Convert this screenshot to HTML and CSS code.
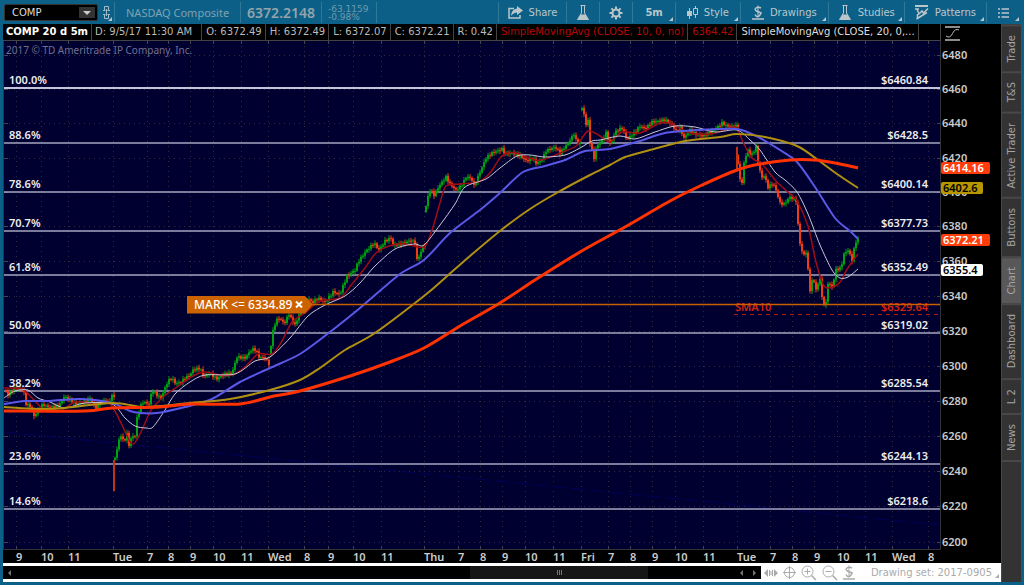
FILE: index.html
```html
<!DOCTYPE html>
<html lang="en">

<head>
  <meta charset="UTF-8">
  <meta name="viewport" content="width=device-width, initial-scale=1.0">
  <title>COMP 20 d 5m</title>
  <link rel="stylesheet" href="styles.css">
</head>

<body>
  <header class="toolbar">
    <div class="symbol">
      <input class="symbol-input" type="text" value="COMP" aria-label="Symbol">
      <button class="symbol-drop" aria-label="Symbol list"><svg width="8" height="4" viewBox="0 0 8 4"><path d="M0 0h8L4 4z" fill="#ccc"/></svg></button>
    </div>
    <button class="link corner" aria-label="Link">
      <svg width="7" height="13" viewBox="0 0 7 13" fill="none" stroke="#9fbccb"><path d="M1.500 5V.5h4V5M1.500 8v4.500h4V8M0 4.500h2.500M4.500 4.500H7M0 8.500h2.500M4.500 8.500H7M3.500 3v7"/></svg>
    </button>
    <div class="cell name">NASDAQ Composite</div>
    <div class="cell last">6372.2148</div>
    <div class="cell change"><span>-63.1159</span><span>-0.98%</span></div>
    <div class="cell spacer"></div>
    <button class="cell tool share">
      <svg width="15" height="13" viewBox="0 0 15 13"><path d="M6 2.500H1V12h11V9" fill="none" stroke="#bbc6cb" stroke-width="1.500"/><path d="M9 0l6 4.500L9 9V6.500Q5.500 6.500 3 10 3.500 3 9 2.500z" fill="#bbc6cb"/></svg>
      Share
    </button>
    <button class="cell tool flask" aria-label="Lab">
      <svg width="14" height="16" viewBox="0 0 14 16"><path d="M4.500 .5h5M5.500 1v7L1.500 14.500h11L8.500 8V1" fill="none" stroke="#bbc6cb"/><path d="M4.500 9.500h5l3 5.500h-11z" fill="#bbc6cb"/></svg>
    </button>
    <button class="cell tool gear" aria-label="Settings">
      <svg width="14" height="14" viewBox="0 0 14 14" fill="none" stroke="#bbc6cb"><circle cx="7" cy="7" r="3.500" stroke-width="2"/><path d="M7 .5v2.500M7 11v2.500M.5 7H3M11 7h2.500M2.400 2.400l1.800 1.800M9.800 9.800l1.800 1.800M2.400 11.600l1.800-1.800M9.800 4.200l1.800-1.800" stroke-width="2"/></svg>
    </button>
    <button class="cell tool period corner">5m</button>
    <button class="cell tool style corner">
      <svg width="11" height="13" viewBox="0 0 11 13"><path d="M2.500 2v11M8.500 0v2M8.500 9v3" stroke="#bbc6cb"/><path d="M0 5h5v5H0z" fill="#bbc6cb"/><path d="M6.500 2.500h4v6h-4z" fill="none" stroke="#bbc6cb"/></svg>
      Style
    </button>
    <button class="cell tool drawings corner">
      <svg width="12" height="15" viewBox="0 0 12 15" fill="none" stroke="#bbc6cb" stroke-width="1.500"><path d="M9 3Q6 1.500 4 3T4.500 6 8.500 7.500 7.500 10.500 3 9.500"/><path d="M6 .5v11" stroke-width="1"/><path d="M0 14h12"/></svg>
      Drawings
    </button>
    <button class="cell tool studies corner">
      <svg width="14" height="16" viewBox="0 0 14 16"><path d="M4.500 .5h5M5.500 1v7L1.500 14.500h11L8.500 8V1" fill="none" stroke="#bbc6cb"/><path d="M4.500 9.500h5l3 5.500h-11z" fill="#bbc6cb"/></svg>
      Studies
    </button>
    <button class="cell tool patterns corner">
      <svg width="14" height="15" viewBox="0 0 14 15" fill="none" stroke="#bbc6cb"><path d="M0 1h13" stroke-width="2"/><path d="M2 4l2 5 3-3 1.500 2L13 3.500M1.500 14L12 7.500M2.500 13V9M0 4h4" stroke-width="1.500"/></svg>
      Patterns
    </button>
    <button class="cell tool list corner" aria-label="Menu">
      <svg width="11" height="10" viewBox="0 0 11 10" stroke="#bbc6cb" stroke-width="1.500"><path d="M0 1h2M3.500 1H11M0 5h2M3.500 5H11M0 9h2M3.500 9H11"/></svg>
    </button>
  </header>

  <main class="workspace">
    <section class="chart">
      <div class="info">
        <b>COMP 20 d 5m</b>
        <span class="date">D: 9/5/17 11:30 AM</span>
        <span>O: 6372.49</span>
        <span>H: 6372.49</span>
        <span>L: 6372.07</span>
        <span>C: 6372.21</span>
        <span>R: 0.42</span>
        <span class="sma10">SimpleMovingAvg (CLOSE, 10, 0, no)</span>
        <span class="sma10">6364.42</span>
        <span class="sma20">SimpleMovingAvg (CLOSE, 20, 0,...</span>
        <span class="rest"></span>
        <button class="fit" aria-label="Fit price axis">
          <svg width="15" height="15" viewBox="0 0 15 15" fill="none" stroke="#bbb"><path d="M0 1h15M0 14h15" stroke-width="1.500"/><path d="M1 10q4 3 6.500-2.500T14 4"/></svg>
        </button>
      </div>
      <svg class="plot" id="plot" role="img" aria-label="NASDAQ Composite, 5 minute candles"></svg>
      <footer class="bottom">
        <div class="scroll">
          <button aria-label="Scroll to start"><svg width="3" height="6" viewBox="0 0 3 6"><path d="M3 0v6L0 3z" fill="#777"/></svg></button>
          <div class="track"><span></span><div class="thumb"><i></i><i></i><i></i></div><span></span></div>
          <button aria-label="Scroll left"><svg width="3" height="6" viewBox="0 0 3 6"><path d="M3 0v6L0 3z" fill="#777"/></svg></button>
          <button aria-label="Scroll right"><svg width="3" height="6" viewBox="0 0 3 6"><path d="M0 0v6l3-3z" fill="#777"/></svg></button>
        </div>
        <div class="zoom">
          <button aria-label="Expand"><svg width="14" height="8" viewBox="0 0 14 8"><path d="M4 0v8L0 4zM10 0v8l4-4z" fill="#aaa"/><path d="M5.500 1v6M8.500 1v6M7 2v4" stroke="#aaa"/></svg></button>
          <button aria-label="Crosshair"><svg width="13" height="13" viewBox="0 0 13 13" fill="none" stroke="#aaa"><circle cx="6.500" cy="6.500" r="5"/><path d="M6.500 0v13M0 6.500h13"/></svg></button>
          <button aria-label="Zoom in"><svg width="16" height="16" viewBox="0 0 16 16" fill="none" stroke="#aaa"><circle cx="6.500" cy="6.500" r="5.500"/><path d="M3.500 6.500h6M6.500 3.500v6"/><path d="M10.500 10.500l4.500 4.500" stroke-width="1.500"/></svg></button>
          <button aria-label="Zoom out"><svg width="16" height="16" viewBox="0 0 16 16" fill="none" stroke="#aaa"><circle cx="6.500" cy="6.500" r="5.500"/><path d="M3.500 6.500h6"/><path d="M10.500 10.500l4.500 4.500" stroke-width="1.500"/></svg></button>
          <button aria-label="Drawings"><svg width="12" height="15" viewBox="0 0 12 15" fill="none" stroke="#aaa" stroke-width="1.500"><path d="M9 3Q6 1.500 4 3T4.500 6 8.500 7.500 7.500 10.500 3 9.500"/><path d="M6 .5v11" stroke-width="1"/><path d="M0 14h12"/></svg></button>
        </div>
        <button class="set corner">Drawing set: 2017-0905</button>
      </footer>
    </section>
    <nav class="tabs">
      <button>Trade</button>
      <button>T&amp;S</button>
      <button>Active Trader</button>
      <button>Buttons</button>
      <button class="active">Chart</button>
      <button>Dashboard</button>
      <button>L 2</button>
      <button>News</button>
      <span class="end"></span>
    </nav>
  </main>
  <script src="chart.js"></script>
</body>

</html>
```

FILE: styles.css
```css
*,
*::before,
*::after {
  box-sizing: border-box;
}
body {
  display: flex;
  flex-flow: column;
  height: 100vh;
  margin: 0;
  padding: 0 3px 3px;
  background: #0c5f86;
  color: #bbb;
  font: 10px/14px "DejaVu Sans", sans-serif;
  overflow: hidden;
}
button,
input {
  margin: 0;
  padding: 0;
  border: 0;
  background: none;
  color: inherit;
  font: inherit;
}
svg {
  display: block;
  flex: none;
}

/* toolbar */
.toolbar {
  display: flex;
  flex: none;
  align-items: stretch;
  height: 24px;
  padding: 2px 0 1px;
  color: #bbc6cb;
}
.symbol {
  display: flex;
  align-items: center;
  width: 94px;
  height: 17px;
  margin: 2px 0 0 1px;
  padding: 1px 2px;
  border: 1px solid #333;
  border-radius: 2px;
  background: #000;
}
.symbol-input {
  flex: 1;
  min-width: 0;
  padding-left: 5px;
  color: #ddd;
}
.symbol-drop {
  display: flex;
  align-items: center;
  justify-content: center;
  width: 16px;
  height: 11px;
  background: #333;
}
.link {
  display: flex;
  align-items: center;
  width: 16px;
  padding-left: 5px;
}
.cell {
  display: flex;
  align-items: center;
  border-left: 1px solid #2f7898;
}
.corner {
  position: relative;
}
.corner::after {
  content: "";
  position: absolute;
  right: 2px;
  bottom: 2px;
  border: 2px solid transparent;
  border-right-color: #bbc6cb;
  border-bottom-color: #bbc6cb;
}
.name {
  padding: 0 11px;
  color: #7fa3b4;
  font: 11px "Noto Sans", sans-serif;
}
.last {
  padding: 0 6px;
  color: #94a4ab;
  font: 600 14px "Noto Sans", sans-serif;
}
.change {
  flex-flow: column;
  align-items: flex-start;
  justify-content: center;
  width: 55px;
  padding-left: 6px;
  color: #6f9aad;
  font-size: 9px;
  line-height: 8px;
}
.spacer {
  flex: 1;
}
.tool {
  gap: 6px;
  padding: 0 9px;
}
.period {
  padding: 0 12px;
  font-weight: bold;
}
.style,
.drawings {
  padding: 0 11px;
}
.patterns {
  padding: 0 10px;
}
.list {
  padding: 0 12px 0 11px;
}

/* chart */
.workspace {
  display: flex;
  flex: 1;
  min-height: 0;
}
.chart {
  display: flex;
  flex: 1;
  flex-flow: column;
  min-width: 0;
  background: #000;
}
.info {
  display: flex;
  flex: none;
  height: 17px;
  margin-right: 40px;
  line-height: 16px;
  white-space: nowrap;
}
.info b,
.info span {
  padding: 0 3px 0 4px;
  border-right: 1px solid #444;
  border-bottom: 1px solid #444;
}
.info b {
  padding: 0 3px;
  color: #fff;
}
.info .date {
  padding: 0 9px 0 3px;
}
.info .sma10 {
  color: #b40808;
}
.info .sma20 {
  color: #ddd;
}
.info .rest {
  flex: 1;
}
.fit {
  padding: 1px 1px 0 4px;
}
.plot {
  flex: 1;
  width: 100%;
  min-height: 0;
  font: 600 11px "Noto Sans", sans-serif;
}
.plot .legal {
  font: 10px "Noto Sans", sans-serif;
}
.plot .alert {
  font-size: 12px;
  font-weight: 500;
}

/* bottom bar */
.bottom {
  display: flex;
  flex: none;
  align-items: center;
  height: 19px;
  background: #fff;
  color: #aaa;
}
.scroll {
  display: flex;
  flex: 1;
  height: 13px;
  background: #000;
}
.scroll button {
  display: flex;
  align-items: center;
  justify-content: center;
  width: 13px;
}
.track {
  display: grid;
  flex: 1;
  grid-template-columns: 452fr 177fr 86fr;
}
.thumb {
  display: flex;
  align-items: center;
  justify-content: center;
  gap: 1px;
  background: #161616;
}
.thumb i {
  width: 1px;
  height: 5px;
  background: #777;
}
.zoom {
  display: flex;
  align-items: center;
  gap: 5px;
  padding-left: 3px;
}
.set {
  margin-left: 16px;
  padding-right: 9px;
}
.set::after {
  border-right-color: #aaa;
  border-bottom-color: #aaa;
}

/* side tabs */
.tabs {
  display: flex;
  flex: none;
  flex-flow: column;
  width: 20px;
  background: #333;
  color: #a4a4a4;
}
.tabs button {
  padding: 9px 2px;
  border-bottom: 2px solid #484848;
  border-right: 1px solid #484848;
  writing-mode: vertical-rl;
  transform: rotate(180deg);
}
.tabs .active {
  background: #585858;
}
.tabs .end {
  flex: 1;
  border-top: 2px solid #484848;
  border-left: 1px solid #484848;
}
```

FILE: chart.js
```js
const plot = document.getElementById('plot')
const NS = 'http://www.w3.org/2000/svg'

// the drawing space of the studies below
const BASE = { left: 3, top: 41 }
const AXIS_X = 940
const AXIS_Y = 549

const times = [
  [16, '9'], [41, '10'], [68, '11'], [113, 'Tue'], [147, '7'], [168, '8'], [190, '9'], [213, '10'],
  [241, '11'], [268, 'Wed'], [304, '8'], [328, '9'], [353, '10'], [381, '11'], [424, 'Thu'],
  [458, '7'], [480, '8'], [502, '9'], [525, '10'], [553, '11'], [581, 'Fri'], [608, '7'],
  [630, '8'], [652, '9'], [675, '10'], [703, '11'], [737, 'Tue'], [770, '7'], [792, '8'],
  [814, '9'], [837, '10'], [865, '11'], [892, 'Wed'], [928, '8']
]

const levels = [
  ['100.0%', 6460.84], ['88.6%', 6428.5], ['78.6%', 6400.14], ['70.7%', 6377.73], ['61.8%', 6352.49],
  ['50.0%', 6319.02], ['38.2%', 6285.54], ['23.6%', 6244.13], ['14.6%', 6218.6]
]

const tags = [
  [6414.16, '#ff3c0a', '#fff'], [6402.6, '#b89600', '#000'],
  [6372.21, '#ff3c0a', '#fff'], [6355.4, '#fff', '#000']
]

// one list of closes per trading day
const sessions = [
  [5,390, 8,395, 11,391, 15,388, 23,390, 25,396, 26,404, 30,406, 34,416, 37,412, 40,408, 43,404, 47,407, 55,407, 60,404, 64,397, 69,399, 76,404, 84,402, 90,398, 93,404, 96,408, 100,403, 104,400, 109,402, 112,396],
  [114,460, 117,450, 120,434, 124,442, 127,434, 129,445, 132,436, 135,436, 137,418, 142,402, 149,404, 152,390, 157,395, 161,398, 165,388, 168,381, 172,378, 175,383, 180,383, 185,378, 190,375, 193,370, 200,368, 204,377, 209,373, 217,379, 222,375, 232,373, 237,357, 245,358, 252,349, 256,350, 259,357, 266,358, 268,364],
  [270,355, 272,335, 276,320, 280,318, 284,324, 289,314, 293,322, 296,325, 300,310, 303,305, 308,298, 312,303, 318,298, 325,302, 333,292, 340,294, 347,276, 355,270, 358,262, 366,251, 374,243, 379,250, 385,241, 391,238, 393,245, 402,244, 411,240, 415,243, 417,260, 421,252, 423,246],
  [425,212, 427,200, 430,190, 434,195, 439,186, 446,177, 450,184, 456,190, 461,186, 467,176, 472,180, 474,186, 480,172, 486,158, 492,153, 502,149, 505,154, 512,153, 520,156, 527,161, 533,158, 536,163, 541,161, 546,151, 555,147, 560,153, 568,143, 574,134, 577,143, 579,143],
  [581,110, 583,108, 586,125, 589,118, 590,143, 594,158, 597,145, 601,142, 606,133, 610,144, 616,131, 622,128, 627,139, 635,132, 640,126, 645,129, 652,122, 665,120, 672,125, 676,131, 680,128, 684,138, 690,130, 695,134, 703,136, 712,131, 718,127, 722,123, 729,127, 736,126],
  [737,155, 739,175, 742,184, 744,162, 748,150, 751,156, 756,147, 758,163, 762,178, 765,174, 767,188, 773,183, 777,193, 780,203, 784,204, 790,197, 796,201, 798,225, 800,243, 803,256, 806,252, 808,270, 810,290, 813,277, 816,290, 820,278, 821,295, 824,304, 826,303, 828,283, 833,288, 835,270, 841,268, 844,254, 848,250, 852,260, 855,244, 857,239]
]

const averages = [
  { color: '#a00c14', width: 1.5, points: [4,388, 22,389, 30,396, 38,404, 45,411, 60,411, 75,402, 90,403, 108,402, 116,413, 122,425, 132,444, 140,434, 150,412, 157,403, 168,393, 180,385, 193,376, 205,372, 220,375, 232,375, 245,367, 258,354, 272,354, 282,341, 292,322, 305,313, 320,301, 340,298, 352,284, 365,268, 376,253, 392,245, 405,244, 424,247, 432,230, 440,203, 446,186, 460,184, 478,182, 490,173, 500,158, 508,153, 520,154, 535,160, 545,159, 560,153, 576,146, 588,131, 600,136, 610,142, 622,132, 640,133, 660,123, 672,124, 690,133, 710,134, 725,130, 736,127, 743,142, 752,158, 762,164, 776,181, 790,194, 797,201, 808,226, 816,262, 824,286, 833,287, 841,281, 846,271, 852,262, 858,254] },
  { color: '#c8c8d8', width: 1, points: [4,398, 15,391, 28,390, 38,398, 50,402, 65,408, 85,403, 112,404, 125,418, 135,426, 146,428, 153,427, 165,410, 175,394, 190,382, 205,375, 235,374, 255,361, 270,357, 290,338, 308,316, 325,305, 345,296, 360,283, 375,266, 395,249, 414,244, 424,245, 440,225, 455,204, 465,187, 486,179, 500,168, 517,156, 530,155, 545,157, 565,155, 580,148, 592,141, 600,140, 620,136, 635,139, 655,132, 675,126, 695,127, 715,132, 737,130, 750,140, 760,150, 775,172, 785,180, 797,192, 808,214, 820,245, 832,270, 840,278, 848,277, 858,269] },
  { color: '#5a58e6', width: 2, points: [4,404, 25,401, 50,401, 80,399, 112,403, 130,411, 140,413, 157,413, 185,407, 212,399, 240,382, 270,368, 300,354, 330,332, 360,308, 400,274, 424,260, 450,233, 480,210, 500,193, 523,172, 545,166, 565,160, 585,151, 610,149, 640,141, 665,133, 700,130, 737,129, 760,138, 780,150, 797,162, 815,187, 835,218, 850,231, 858,239] },
  { color: '#b09010', width: 2, points: [4,407, 50,409, 112,403, 145,407, 190,403, 230,399, 270,390, 300,380, 320,368, 345,350, 375,333, 424,296, 445,278, 470,256, 500,231, 530,209, 560,191, 590,175, 610,165, 625,157, 650,150, 685,141, 720,137, 737,134, 765,137, 797,146, 818,160, 837,174, 858,188] },
  { color: '#ff3200', width: 3, points: [4,411, 85,411, 112,408, 160,407, 190,404, 240,404, 270,397, 300,391, 350,376, 390,362, 424,348, 460,326, 500,303, 535,280, 580,252, 625,227, 670,201, 700,186, 737,170, 760,164, 790,160, 815,160, 835,163, 858,168] }
]

function add (name, attrs, text) {
  const el = document.createElementNS(NS, name)
  for (const key in attrs) el.setAttribute(key, attrs[key])
  if (text !== undefined) el.textContent = text
  plot.appendChild(el)
  return el
}

function priceY (price) {
  return 55.5 + 487 * Math.log(6480 / price) / Math.log(6480 / 6200)
}

// close of the session at x, between the two nearest points
function closeAt (list, x) {
  let i = 0
  while (i < list.length - 4 && list[i + 2] < x) i += 2
  const t = Math.min(1, Math.max(0, (x - list[i]) / (list[i + 2] - list[i])))
  return list[i + 1] + (list[i + 3] - list[i + 1]) * t
}

// smooth path through the points
function curve (p) {
  let d = `M${p[0]}`
  for (let i = 0; i < p.length - 1; i++) {
    const a = p[Math.max(0, i - 1)]
    const b = p[i]
    const c = p[i + 1]
    const e = p[Math.min(p.length - 1, i + 2)]
    const k = 7
    d += `C${b[0] + (c[0] - a[0]) / k} ${b[1] + (c[1] - a[1]) / k} ${c[0] - (e[0] - b[0]) / k} ${c[1] - (e[1] - b[1]) / k} ${c}`
  }
  return d
}

function draw () {
  plot.innerHTML = ''
  const w = plot.clientWidth
  const h = plot.clientHeight
  const right = w - 61
  const bottom = h - 14
  const X = x => Math.round((x - BASE.left) * right / (AXIS_X - BASE.left))
  const Y = y => (y - BASE.top) * bottom / (AXIS_Y - BASE.top)
  const R = y => Math.round(Y(y)) + 0.5

  add('rect', { width: w, height: h, fill: '#000' })
  add('rect', { x: 1, width: right - 1, height: bottom, fill: '#000030' })
  for (let p = 6200; p <= 6480; p += 20) {
    const y = R(priceY(p) - 0.5)
    add('path', { d: `M1 ${y}H${right}`, stroke: '#2c2c3c', 'stroke-dasharray': '1 4' })
    add('path', { d: `M1 ${y}h4M${right - 3} ${y}h3`, stroke: '#444450' })
    add('text', { x: right + 2, y: y + 3.5, fill: '#ccc' }, p)
  }
  times.forEach(([t, label]) => {
    const x = X(t) + 0.5
    add('path', { d: `M${x} 0V${bottom}`, stroke: '#2c2c3c', 'stroke-dasharray': '1 4' })
    add('path', { d: `M${x} 0v3M${x} ${bottom - 3}v3`, stroke: '#444450' })
    add('text', { x: x - 0.5, y: bottom + 12, fill: '#ccc' }, label)
  })
  add('path', { d: `M1 ${Y(432)}L${right} ${Y(525)}`, stroke: '#000058', 'stroke-dasharray': '14 5' })
  add('path', { d: `M.5 0V${bottom}.5H${right}.5V0`, fill: 'none', stroke: '#333' })
  add('text', { x: 3, y: 13, fill: '#707090', class: 'legal' }, '2017 © TD Ameritrade IP Company, Inc.')

  levels.forEach(([, price], i) => {
    const y = Math.round(Y(priceY(price)))
    add('path', { d: `M1 ${y}H${right}`, stroke: i ? '#a4a4c0' : '#c4c4dc', 'stroke-width': i ? 1.5 : 2 })
  })

  sessions.forEach((list, s) => {
    let prev = closeAt(list, list[0])
    for (let x = list[0], i = 0; x <= list[list.length - 2] + 1; x += 2, i++) {
      const close = closeAt(list, x + 1) + Math.sin(i * 2.7 + s) * 1.2
      const up = close <= prev
      const color = up ? '#00a010' : '#f03c10'
      const top = Math.min(close, prev)
      const height = Math.max(1, Math.abs(close - prev))
      const wick = 1 + Math.abs(Math.sin(i * 1.9)) * 2
      add('path', { d: `M${X(x) + 1} ${Y(top - wick)}V${Y(top + height + wick)}`, stroke: color, 'stroke-width': 1 })
      add('rect', { x: X(x), y: Y(top), width: 2, height, fill: color })
      prev = close
    }
  })
  add('path', { d: `M${X(114)} ${Y(460)}V${Y(491)}`, stroke: '#c03414', 'stroke-width': 2 })
  add('path', { d: `M${X(737)} ${Y(147)}V${Y(170)}`, stroke: '#c03414', 'stroke-width': 2 })

  averages.forEach(a => {
    const points = []
    for (let i = 0; i < a.points.length; i += 2) points.push([X(a.points[i]), Y(a.points[i + 1])])
    add('path', { d: curve(points), fill: 'none', stroke: a.color, 'stroke-width': a.width, 'stroke-linejoin': 'round' })
  })

  levels.forEach(([label, price]) => {
    const y = Math.round(Y(priceY(price))) - 4
    add('text', { x: 6, y, fill: '#eee' }, label)
    add('text', { x: right - 12, y, fill: '#eee', 'text-anchor': 'end' }, '$' + price)
  })

  // 10 period average level
  add('path', { d: `M${X(734)} ${R(314)}H${right}`, stroke: '#c01414', 'stroke-dasharray': '4 4' })
  add('text', { x: X(735), y: Y(311), fill: '#d82010' }, 'SMA10')
  add('text', { x: right - 12, y: Y(311), fill: '#d82010', 'text-anchor': 'end' }, '$6329.64')

  // alert
  const mark = R(304)
  const mx = X(187)
  add('path', { d: `M${mx + 118} ${mark}H${right}`, stroke: '#c86000', 'stroke-width': 1.5 })
  add('path', { d: `M${mx} ${mark - 8.5}h118l8 8.500-8 9h-118z`, fill: '#cc6200' })
  add('text', { x: mx + 7, y: mark + 4, fill: '#fff', class: 'alert' }, 'MARK <= 6334.89')
  add('path', { d: `M${mx + 109} ${mark - 3}l6 6m0-6l-6 6`, stroke: '#fff', 'stroke-width': 2 })

  tags.forEach(([price, fill, color]) => {
    const y = Math.round(Y(priceY(price)))
    const width = String(price).length > 6 ? 49 : 42
    add('rect', { x: right + 1, y: y - 6, width, height: 12, rx: 2, fill })
    add('text', { x: right + 3, y: y + 4, fill: color }, price)
  })
}

draw()
window.addEventListener('resize', draw)
```
